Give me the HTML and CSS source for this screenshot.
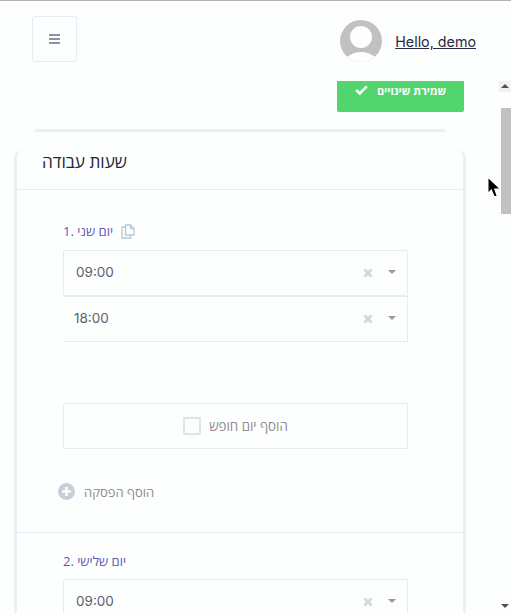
FILE: index.html
```html
<!DOCTYPE html>
<html lang="he">
<head>
    <meta charset="UTF-8">
    <meta name="viewport" content="width=device-width, initial-scale=1.0">
    <title>שעות עבודה</title>
    <link rel="stylesheet" href="styles.css">
</head>
<body>
    <header class="topbar">
        <button class="menu-btn" aria-label="menu">
            <svg width="11" height="10" viewBox="0 0 11 10"><path d="M0 1h11M0 5h11M0 9h11" stroke="#8a94a8" stroke-width="2"/></svg>
        </button>
        <div class="user">
            <svg class="avatar" width="42" height="42" viewBox="0 0 42 42">
                <defs><clipPath id="round"><circle cx="21" cy="21" r="21"/></clipPath></defs>
                <g clip-path="url(#round)">
                    <rect width="42" height="42" fill="#c1c1c1"/>
                    <circle cx="21" cy="17" r="11" fill="#fdfefe"/>
                    <ellipse cx="21" cy="47" rx="19" ry="15" fill="#fdfefe"/>
                    <rect y="36" width="2" height="6" fill="#fdfefe"/>
                </g>
            </svg>
            <a class="user-link" href="#">Hello, demo</a>
        </div>
    </header>

    <div class="actions">
        <button class="save-btn">
            <svg width="13" height="10" viewBox="0 0 13 10"><path d="M1.2 5l3.6 3.4L11.8 1.4" fill="none" stroke="#fff" stroke-width="2.6"/></svg>
            <span>שמירת שינויים</span>
        </button>
    </div>

    <div class="card-peek"></div>

    <main class="card">
        <h1 class="card-title">שעות עבודה</h1>

        <section class="day">
            <div class="day-label">
                <span>1. יום שני</span>
                <svg width="14" height="15" viewBox="0 0 14 15" fill="none" stroke="#b9c6d6" stroke-width="1.3">
                    <path d="M4.5 3H1v11h8.5v-3"/>
                    <path d="M4.5 1h5l3.500 3.500V11h-8.500z"/>
                    <path d="M9.500 1v3.500H13"/>
                </svg>
            </div>
            <div class="select">
                <span class="select-value">09:00</span>
                <svg class="clear" width="10" height="10" viewBox="0 0 10 10"><path d="M1.500 1.500l7 7M8.500 1.500l-7 7" stroke="#d4d9e1" stroke-width="3"/></svg>
                <span class="caret"></span>
            </div>
            <div class="select select-end">
                <span class="select-value">18:00</span>
                <svg class="clear" width="10" height="10" viewBox="0 0 10 10"><path d="M1.500 1.500l7 7M8.500 1.500l-7 7" stroke="#d4d9e1" stroke-width="3"/></svg>
                <span class="caret"></span>
            </div>
            <label class="holiday">
                <span class="checkbox"></span>
                <span>הוסף יום חופש</span>
            </label>
            <div class="add-break">
                <svg width="17" height="17" viewBox="0 0 17 17">
                    <circle cx="8.500" cy="8.500" r="8.500" fill="#c9ced9"/>
                    <path d="M8.500 4v9M4 8.500h9" stroke="#fdfefe" stroke-width="2.600"/>
                </svg>
                <span>הוסף הפסקה</span>
            </div>
        </section>

        <section class="day">
            <div class="day-label day-label-second">
                <span>2. יום שלישי</span>
            </div>
            <div class="select">
                <span class="select-value">09:00</span>
                <svg class="clear" width="10" height="10" viewBox="0 0 10 10"><path d="M1.500 1.500l7 7M8.500 1.500l-7 7" stroke="#d4d9e1" stroke-width="3"/></svg>
                <span class="caret"></span>
            </div>
        </section>
    </main>

    <div class="scrollbar">
        <span class="scroll-up"></span>
        <span class="scroll-thumb"></span>
        <span class="scroll-down"></span>
    </div>

    <svg class="cursor" width="12" height="19" viewBox="0 0 12 19"><path d="M0.500 0.500V14L3.500 11L6.500 18H8.500L6 10.500H11z" fill="#000"/></svg>
</body>
</html>
```

FILE: styles.css
```css
body{
    margin: 0;
    height: 613px;
    overflow: hidden;
    position: relative;
    background-color: #fdfefe;
    border-top: 1px solid #b3b3b3;
    box-sizing: border-box;
    font-family: "Open Sans", "Liberation Sans", Arial, sans-serif;
}
.topbar{
    height: 80px;
    box-sizing: border-box;
    padding: 15px 35px 0 32px;
    display: flex;
    justify-content: space-between;
    align-items: flex-start;
}
.menu-btn{
    width: 45px;
    height: 46px;
    padding: 0;
    display: flex;
    align-items: center;
    justify-content: center;
    background: #fdfefe;
    border: 1px solid #e8ebf5;
    border-radius: 3px;
}
.user{
    display: flex;
    align-items: center;
    gap: 13px;
    margin-top: 4px;
}
.user-link{
    font-family: Inter, "Noto Sans", sans-serif;
    font-size: 14.300px;
    color: #2a2a45;
}
.actions{
    display: flex;
    justify-content: flex-end;
    padding-right: 47px;
}
.save-btn{
    width: 127px;
    height: 31px;
    padding: 0 0 13px;
    display: flex;
    align-items: center;
    justify-content: center;
    gap: 9px;
    color: #fff;
    font-family: "Open Sans", "Liberation Sans", sans-serif;
    font-size: 11px;
    font-weight: bold;
    background: #53d56d;
    border: 0;
    border-radius: 0 0 2px 2px;
}
.card-peek{
    height: 3px;
    margin: 17px 65px 0 34px;
    background: #eeeff5;
    border-radius: 3px 3px 0 0;
}
.card{
    margin: 18px 45px 0 14px;
    background: #fdfefe;
    border-left: 3px solid #eeeff5;
    border-right: 3px solid #eeeff5;
    border-radius: 8px 8px 0 0;
}
.card-title{
    height: 39px;
    margin: 0;
    padding: 0 25px;
    font-size: 17.200px;
    font-weight: normal;
    line-height: 23px;
    color: #26263a;
    border-bottom: 1px solid #e8ebf5;
}
.day{
    padding: 33px 55px 32px 46px;
    border-bottom: 1px solid #e8ebf5;
}
.day-label{
    display: flex;
    align-items: center;
    gap: 8px;
    height: 16px;
    margin-bottom: 11px;
    font-size: 13px;
    color: #5a59b4;
}
.day-label-second{
    margin-top: -13px;
    margin-bottom: 10px;
}
.select{
    height: 46px;
    box-sizing: border-box;
    display: flex;
    align-items: center;
    padding: 0 11px 2px 12px;
    border: 1px solid #e8ebf5;
    border-radius: 2px;
    font-family: Inter, "Noto Sans", sans-serif;
    font-size: 13.500px;
    color: #5b606c;
}
.select-end{
    border-left: 0;
    padding-left: 11px;
    border-radius: 0;
}
.select-value{
    flex: 1;
}
.clear{
    margin: 2px 15px 0 0;
}
.caret{
    width: 0;
    height: 0;
    border-left: 4px solid transparent;
    border-right: 4px solid transparent;
    border-top: 4px solid #999;
}
.holiday{
    height: 46px;
    box-sizing: border-box;
    margin-top: 61px;
    display: flex;
    align-items: center;
    justify-content: center;
    gap: 8px;
    border: 1px solid #e8ebf5;
    border-radius: 2px;
    font-size: 13.300px;
    color: #8d8d8d;
}
.checkbox{
    width: 18px;
    height: 18px;
    box-sizing: border-box;
    border: 2px solid #dfe3ea;
}
.add-break{
    display: flex;
    align-items: center;
    gap: 9px;
    height: 17px;
    margin: 34px 0 0 -5px;
    font-size: 13px;
    color: #8d8d8d;
}
.scrollbar{
    position: absolute;
    top: 80px;
    right: 0;
    bottom: 0;
    width: 12px;
}
.scroll-up{
    position: absolute;
    top: 0;
    right: 0;
    width: 12px;
    height: 11px;
    background: #f1f1f1;
}
.scroll-up::after{
    content: "";
    position: absolute;
    left: 2px;
    top: 3px;
    border-left: 4px solid transparent;
    border-right: 4px solid transparent;
    border-bottom: 4px solid #505050;
}
.scroll-thumb{
    position: absolute;
    top: 27px;
    right: 0;
    width: 10px;
    height: 106px;
    background: #c1c1c1;
}
.scroll-down{
    position: absolute;
    bottom: 5px;
    left: 2px;
    border-left: 4px solid transparent;
    border-right: 4px solid transparent;
    border-top: 4px solid #505050;
}
.cursor{
    position: absolute;
    top: 177px;
    left: 488px;
}
```
